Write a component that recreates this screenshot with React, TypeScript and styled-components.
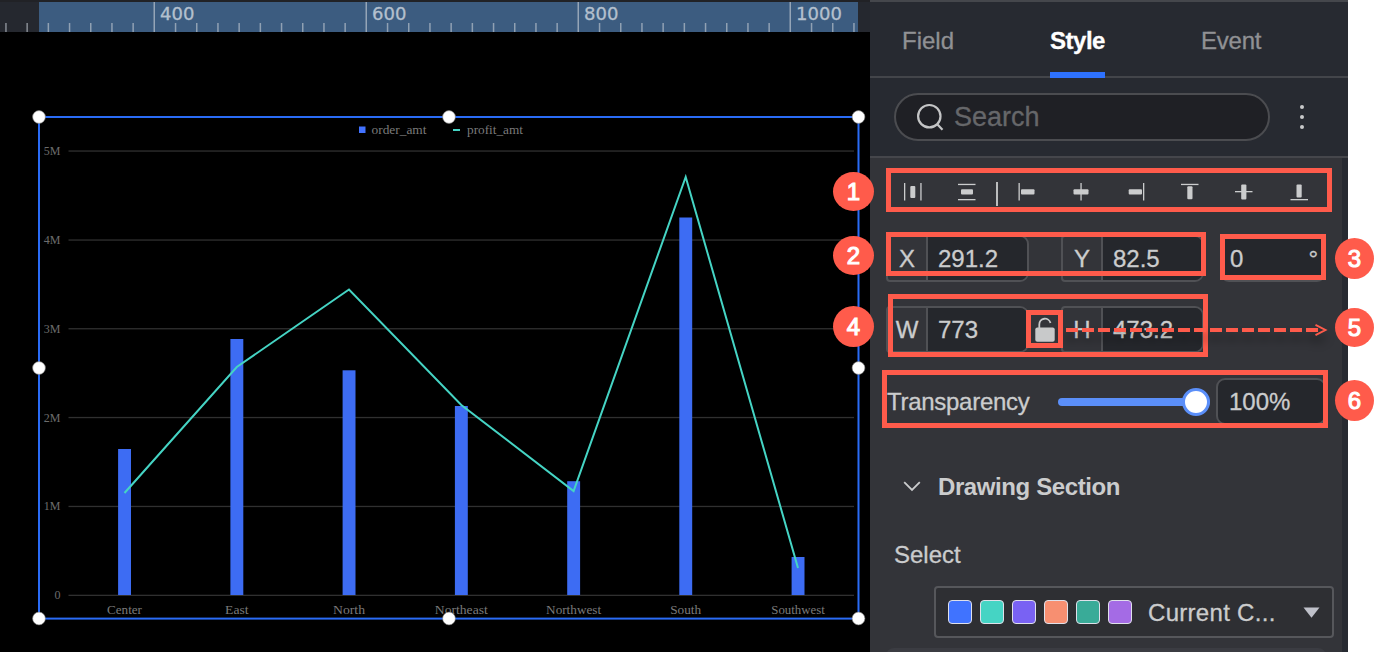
import React from "react";
import styled, { createGlobalStyle } from "styled-components";

const Global = createGlobalStyle`
  * { box-sizing: border-box; }
  html, body { margin: 0; background: #fff; overflow: hidden; }
`;

const sans = `"Liberation Sans", Arial, sans-serif`;
const red = "#ff5b4b";

const Page = styled.div`
  position: relative;
  display: flex;
  width: 1374px;
  height: 652px;
  overflow: hidden;
  font-family: ${sans};
  font-size: 24px;
  color: #cbcccd;
`;

const Workspace = styled.main`
  display: flex;
  flex-direction: column;
  width: 870px;
  background: #000;
`;

const Ruler = styled.header`
  height: 32px;
  border-top: 2px solid #212226;
  background: #25282f;
  svg { display: block; }
`;

const Canvas = styled.section`
  flex: 1;
  svg { display: block; }
`;

const Panel = styled.aside`
  display: flex;
  flex-direction: column;
  width: 478px;
  background: #272a31;
  border-top: 2px solid #45474c;
  -webkit-text-stroke: 0.3px currentColor;
`;

const Tabs = styled.nav`
  display: flex;
  flex: none;
  height: 76px;
  padding-left: 32px;
  gap: 96px;
  border-bottom: 2px solid #43454a;
`;

const Tab = styled.div<{ $active?: boolean; $spacing?: number }>`
  height: 76px;
  line-height: 77px;
  letter-spacing: ${(p) => p.$spacing ?? 0}px;
  font-weight: ${(p) => (p.$active ? 700 : 400)};
  color: ${(p) => (p.$active ? "#fff" : "#909194")};
  border-bottom: ${(p) => (p.$active ? "6px solid #2e72ff" : "0")};
`;

const SearchRow = styled.div`
  display: flex;
  flex: none;
  align-items: center;
  height: 80px;
  padding: 0 0 0 24px;
  border-bottom: 2px solid #45464b;
`;

const SearchBox = styled.div`
  display: flex;
  align-items: center;
  width: 376px;
  height: 48px;
  padding-left: 20px;
  gap: 9px;
  border: 2px solid #4b4c50;
  border-radius: 24px;
  background: #1f2025;
  color: #66676a;
  font-size: 27px;
`;

const More = styled.svg`
  margin-left: 24px;
`;

const Body = styled.div`
  flex: 1;
  min-height: 0;
  overflow: hidden;
  width: 472px;
  padding-left: 16px;
  background: #333439;
`;

const AlignBar = styled.div`
  display: flex;
  align-items: center;
  height: 68px;
`;

const Glyph = styled.svg<{ $gap: number }>`
  flex: none;
  margin-left: ${(p) => p.$gap}px;
  fill: #cbcccd;
`;

const Separator = styled.i<{ $gap: number }>`
  width: 2px;
  height: 24px;
  margin: 4px 0 0 ${(p) => p.$gap}px;
  background: #bcbdbe;
`;

const FieldRow = styled.div<{ $top: number }>`
  display: flex;
  align-items: center;
  height: 47px;
  margin-top: ${(p) => p.$top}px;
`;

const Field = styled.div`
  display: flex;
  width: 143px;
  height: 47px;
  border: 2px solid #505155;
  border-radius: 4px 9px 9px 4px;
  overflow: hidden;
  line-height: 44px;
`;

const FieldName = styled.span`
  width: 40px;
  text-align: center;
  border-right: 2px solid #505155;
`;

const FieldValue = styled.span`
  flex: 1;
  padding-left: 10px;
  background: #25272c;
`;

const LockSlot = styled.div`
  display: flex;
  justify-content: center;
  width: 32px;
`;

const NumberBox = styled.div<{ $left: number; $width: number; $pad?: number }>`
  display: flex;
  justify-content: space-between;
  width: ${(p) => p.$width}px;
  height: 47px;
  margin-left: ${(p) => p.$left}px;
  padding: 0 6px 0 ${(p) => p.$pad ?? 8}px;
  border: 2px solid #505155;
  border-radius: 9px;
  background: #25272c;
  line-height: 44px;
`;

const SliderName = styled.span`
  width: 172px;
  padding-left: 1px;
  letter-spacing: -0.28px;
`;

const Track = styled.div`
  display: flex;
  align-items: center;
  justify-content: flex-end;
  width: 152px;
  height: 8px;
  border-radius: 4px;
  background: #5b8ff9;
`;

const Thumb = styled.i`
  width: 28px;
  height: 28px;
  border: 3.5px solid #5b8ff9;
  border-radius: 50%;
  background: #fff;
`;

const SectionTitle = styled.h2`
  display: flex;
  align-items: center;
  height: 28px;
  margin: 48px 0 0;
  padding-left: 17px;
  gap: 17px;
  font-size: 24px;
  letter-spacing: -0.4px;
  -webkit-text-stroke: 0;
`;

const SelectLabel = styled.div`
  height: 28px;
  margin-top: 40px;
  padding-left: 8px;
  line-height: 28px;
`;

const Dropdown = styled.div`
  display: flex;
  align-items: center;
  width: 400px;
  height: 52px;
  margin: 17px 0 0 48px;
  padding: 0 12px;
  gap: 8px;
  border: 2px solid #56575b;
  border-radius: 4px;
  background: #2e2f33;
`;

const Swatch = styled.i<{ $color: string }>`
  width: 24px;
  height: 24px;
  border: 1px solid #dfe0ea;
  border-radius: 4px;
  background: ${(p) => p.$color};
`;

const DropdownText = styled.span`
  flex: 1;
  margin: 2px 0 0 8px;
  letter-spacing: 0.3px;
`;

const NextCard = styled.div`
  width: 440px;
  height: 16px;
  margin-top: 10px;
  border-radius: 10px;
  background: #3b3c42;
`;

const Frame = styled.div<{ $x: number; $y: number; $w: number; $h: number }>`
  position: absolute;
  left: ${(p) => p.$x}px;
  top: ${(p) => p.$y}px;
  width: ${(p) => p.$w}px;
  height: ${(p) => p.$h}px;
  border: 5px solid ${red};
`;

const Badge = styled.div<{ $x: number; $y: number; $w: number; $h: number }>`
  position: absolute;
  left: ${(p) => p.$x}px;
  top: ${(p) => p.$y}px;
  width: ${(p) => p.$w}px;
  height: ${(p) => p.$h}px;
  border-radius: 50%;
  background: ${red};
  color: #fff;
  text-align: center;
  line-height: ${(p) => p.$h}px;
  font-size: 24px;
  -webkit-text-stroke: 1.1px #fff;
`;

const Arrow = styled.svg`
  position: absolute;
  left: 1060px;
  top: 316px;
  filter: drop-shadow(0 8px 5px rgba(0, 0, 0, 0.4));
`;

const bars = [
  { name: "Center", x: 124.5, top: 449, line: 493, w: 35 },
  { name: "East", x: 236.8, top: 339, line: 367, w: 23.5 },
  { name: "North", x: 349, top: 370.3, line: 289.5, w: 32 },
  { name: "Northeast", x: 461.3, top: 406, line: 405, w: 53 },
  { name: "Northwest", x: 573.6, top: 481.2, line: 491, w: 55 },
  { name: "South", x: 685.7, top: 217.5, line: 177, w: 31 },
  { name: "Southwest", x: 798, top: 557, line: 568, w: 53.5 },
];
const grid = [
  { label: "5M", y: 151 },
  { label: "4M", y: 240 },
  { label: "3M", y: 328.7 },
  { label: "2M", y: 417.5 },
  { label: "1M", y: 506.4 },
  { label: "0", y: 595.3 },
];
const handles = [
  [39, 117], [449, 117], [858.5, 117], [39, 368],
  [858.5, 368], [39, 618.5], [449, 618.5], [858.5, 618.5],
];

function RulerScale() {
  const ticks = Array.from({ length: 41 }, (_, i) => ({ x: 5.8 + i * 21.2, major: i % 10 === 7 }));
  const labels: [string, number, number][] = [["400", 160, 34.5], ["600", 372, 34.5], ["800", 584, 34.5], ["1000", 796, 46]];
  return (
    <svg width="870" height="30" viewBox="0 2 870 30">
      <rect x="39" y="2" width="819" height="30" fill="#3c5c80" />
      {ticks.map((t, i) => (
        <rect
          key={i}
          x={t.x - 0.6}
          y={t.major ? 2 : 23}
          width={t.major ? 1.2 : 1.5}
          height={t.major ? 30 : 9}
          fill="#c8ced6"
          opacity={t.major ? 0.8 : 0.6}
        />
      ))}
      {labels.map(([t, x, w]) => (
        <text key={t} x={x} y="20" fontFamily="DejaVu Sans, sans-serif" fontSize="18" textLength={w} stroke="#b4c0ce" strokeWidth="0.3" fill="#b4c0ce">
          {t}
        </text>
      ))}
    </svg>
  );
}

function Chart() {
  return (
    <svg width="870" height="620" viewBox="0 32 870 620" fontFamily="Liberation Serif, serif" fontSize="12" fill="#7a7a7a">
      {grid.map((g) => (
        <g key={g.label}>
          <rect x="68.5" y={g.y - 0.6} width="785.5" height="1.3" fill="#303030" />
          <text x="60.5" y={g.y + 4} textAnchor="end" fill="#6c6c6c">{g.label}</text>
        </g>
      ))}
      {bars.map((b) => (
        <g key={b.name}>
          <rect x={b.x - 6.4} y={b.top} width="12.9" height={595 - b.top} fill="#3d6cf3" />
          <text x={b.x - b.w / 2} y="614" textLength={b.w} lengthAdjust="spacingAndGlyphs">{b.name}</text>
        </g>
      ))}
      <polyline points={bars.map((b) => `${b.x},${b.line}`).join(" ")} fill="none" stroke="#45d4c4" strokeWidth="2" />
      <rect x="359" y="126.5" width="6.5" height="6.5" fill="#4272ff" />
      <text x="371.5" y="134" textLength="55" lengthAdjust="spacingAndGlyphs">order_amt</text>
      <rect x="453" y="129" width="7" height="2" fill="#45d4c4" />
      <text x="467" y="134" textLength="56" lengthAdjust="spacingAndGlyphs">profit_amt</text>
      <rect x="39" y="117" width="819.5" height="501.6" fill="none" stroke="#2a6cf6" strokeWidth="2" />
      {handles.map(([x, y]) => (
        <circle key={`${x}-${y}`} cx={x} cy={y} r="6.4" fill="#fff" stroke="#777" strokeWidth="0.6" />
      ))}
    </svg>
  );
}

function AlignIcons() {
  const size = { width: 18, height: 18, viewBox: "0 0 18 18" };
  return (
    <AlignBar>
      <Glyph $gap={18} {...size}>
        <rect x="0" y="0" width="1.3" height="17.5" /><rect x="16.3" width="1.3" height="17.5" /><rect x="6.3" y="3" width="5" height="12" rx="1" />
      </Glyph>
      <Glyph $gap={36} {...size}>
        <rect y="0.8" width="17.5" height="1.3" /><rect y="16" width="17.5" height="1.3" /><rect x="3" y="6.3" width="12" height="5.2" rx="1" />
      </Glyph>
      <Separator $gap={20} />
      <Glyph $gap={20} {...size}>
        <rect x="0.5" width="1.3" height="17.5" /><rect x="3" y="6.3" width="13.5" height="5.2" rx="1" />
      </Glyph>
      <Glyph $gap={36} {...size}>
        <rect x="8.4" width="1.3" height="17.5" /><rect x="1.5" y="6.3" width="15" height="5.2" rx="1" />
      </Glyph>
      <Glyph $gap={37} {...size}>
        <rect x="16" width="1.3" height="17.5" /><rect x="1.7" y="6.3" width="13.3" height="5.2" rx="1" />
      </Glyph>
      <Glyph $gap={36} {...size}>
        <rect y="0.8" width="17.5" height="1.3" /><rect x="6.3" y="3.3" width="5.2" height="13" rx="1" />
      </Glyph>
      <Glyph $gap={36} {...size}>
        <rect y="8" width="17.5" height="1.3" /><rect x="6.2" y="1.5" width="5.2" height="15" rx="1" />
      </Glyph>
      <Glyph $gap={37} {...size}>
        <rect x="0.5" y="16" width="17.5" height="1.3" /><rect x="6.5" y="1.5" width="5.2" height="13" rx="1" />
      </Glyph>
    </AlignBar>
  );
}

const Pair = ({ name, value }: { name: string; value: string }) => (
  <Field>
    <FieldName>{name}</FieldName>
    <FieldValue>{value}</FieldValue>
  </Field>
);

export default function App() {
  return (
    <Page>
      <Global />
      <Workspace>
        <Ruler><RulerScale /></Ruler>
        <Canvas><Chart /></Canvas>
      </Workspace>
      <Panel>
        <Tabs>
          <Tab>Field</Tab>
          <Tab $active $spacing={-0.5}>Style</Tab>
          <Tab $spacing={-0.2}>Event</Tab>
        </Tabs>
        <SearchRow>
          <SearchBox>
            <svg width="29" height="29" viewBox="0 0 29 29" fill="none" stroke="#c4c5c6" strokeWidth="2.2">
              <circle cx="13.3" cy="13.2" r="11.2" /><path d="M21 21l5.5 5.8" />
            </svg>
            Search
          </SearchBox>
          <More width="16" height="28" viewBox="0 0 16 28" fill="#c8c9ca">
            <circle cx="8" cy="4" r="2" /><circle cx="8" cy="14" r="2" /><circle cx="8" cy="24" r="2" />
          </More>
        </SearchRow>
        <Body>
          <AlignIcons />
          <FieldRow $top={9}>
            <Pair name="X" value="291.2" />
            <LockSlot />
            <Pair name="Y" value="82.5" />
            <NumberBox $left={16} $width={106}><span>0</span><span>°</span></NumberBox>
          </FieldRow>
          <FieldRow $top={24}>
            <Pair name="W" value="773" />
            <LockSlot>
              <svg width="20" height="25" viewBox="0 0 20 25">
                <path d="M4.3 11V7.5a5.7 5.7 0 0 1 11.2-1.6" fill="none" stroke="#c8c9ca" strokeWidth="1.8" />
                <rect x="0.3" y="10.4" width="19.4" height="14.3" rx="2" fill="#c8c9ca" />
              </svg>
            </LockSlot>
            <Pair name="H" value="473.2" />
          </FieldRow>
          <FieldRow $top={25}>
            <SliderName>Transparency</SliderName>
            <Track><Thumb /></Track>
            <NumberBox $left={6} $width={110} $pad={11}><span>100%</span></NumberBox>
          </FieldRow>
          <SectionTitle>
            <svg width="18" height="12" viewBox="0 0 18 12" fill="none" stroke="#cbcccd" strokeWidth="1.8">
              <path d="M1.2 1.2L9 9l7.8-7.8" />
            </svg>
            Drawing Section
          </SectionTitle>
          <SelectLabel>Select</SelectLabel>
          <Dropdown>
            {["#4073ff", "#45d4c4", "#7962f3", "#f78f71", "#39ab98", "#a46be5"].map((c) => (
              <Swatch key={c} $color={c} />
            ))}
            <DropdownText>Current C...</DropdownText>
            <svg width="17" height="11" viewBox="0 0 17 11"><path d="M0.5 0.5h16L8.5 10.8z" fill="#bfc1ca" /></svg>
          </Dropdown>
          <NextCard />
        </Body>
      </Panel>

      <Frame $x={886} $y={168} $w={446} $h={44} />
      <Frame $x={886} $y={232} $w={320} $h={44} />
      <Frame $x={1220} $y={234} $w={106} $h={46} />
      <Frame $x={888} $y={294} $w={320} $h={63} />
      <Frame $x={882} $y={370} $w={446} $h={58} />
      <Arrow width="280" height="28" viewBox="0 0 280 28" fill="none" stroke={red}>
        <path d="M4.5 14H258" strokeWidth="4" strokeDasharray="12 4" strokeDashoffset="-1.5" />
        <path d="M255.5 8.8L265.5 14l-10 5.2" strokeWidth="1.9" />
      </Arrow>
      <Frame $x={1026} $y={310} $w={37} $h={38} />
      <Badge $x={833} $y={172} $w={41} $h={39}>1</Badge>
      <Badge $x={833} $y={236} $w={41} $h={39}>2</Badge>
      <Badge $x={1335} $y={238} $w={39} $h={41}>3</Badge>
      <Badge $x={833} $y={306} $w={41} $h={41}>4</Badge>
      <Badge $x={1335} $y={308} $w={39} $h={39}>5</Badge>
      <Badge $x={1335} $y={380} $w={39} $h={41}>6</Badge>
    </Page>
  );
}
